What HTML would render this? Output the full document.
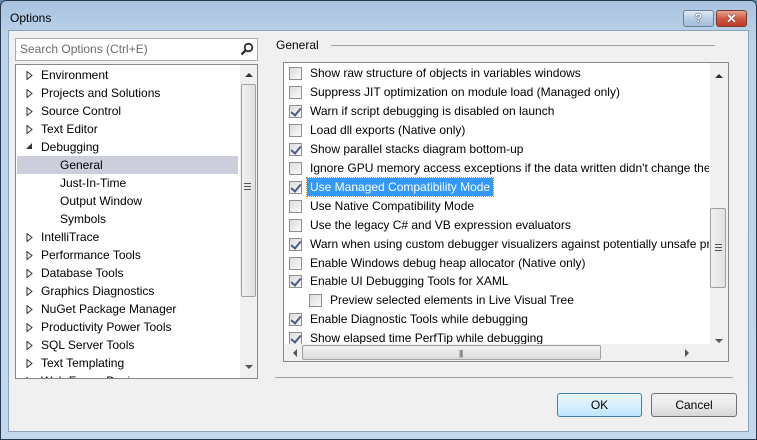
<!DOCTYPE html>
<html><head><style>
*{margin:0;padding:0;box-sizing:border-box}
body{width:757px;height:440px;overflow:hidden;background:#6a8fb5;font-family:"Liberation Sans",sans-serif;font-size:11px;color:#000;position:relative}
.a{position:absolute}
.win{left:0;top:0;width:757px;height:440px;background:linear-gradient(#a9c3df,#bcd3ea 40px,#c3d8ee);border:1px solid #2a3a4a;border-radius:6px 6px 0 0}
.client{left:8px;top:30px;width:741px;height:402px;background:#f0f0f0;border:1px solid #8aa2bc}
.t{white-space:nowrap;line-height:18px}
.cb{width:13px;height:13px;border:1px solid #8e8f8f;background:linear-gradient(135deg,#dcdcdc,#fafafa)}
.ck::after{content:"";position:absolute;left:3px;top:0px;width:4px;height:8px;border:solid #4a5a8a;border-width:0 2px 2px 0;transform:rotate(40deg)}
</style></head><body>
<div class="a win"></div>
<div class="a t" style="left:10px;top:9px;font-size:12px">Options</div>
<div class="a" style="left:683px;top:10px;width:31px;height:17px;border:1px solid #6d7f96;border-radius:3px;background:linear-gradient(#e2ecf7,#b9cde4 50%,#a3bcd9);text-align:center;font-weight:bold;font-size:12px;line-height:15px;color:#fff;text-shadow:0 0 1px #000,0 0 1px #000">?</div>
<div class="a" style="left:716px;top:10px;width:31px;height:17px;border:1px solid #7a3a30;border-radius:3px;background:linear-gradient(#e8a493,#cf5a45 50%,#bd3c28);text-align:center;font-weight:bold;font-size:13px;line-height:15px;color:#fff;text-shadow:0 0 1px #000">✕</div>
<div class="a client"></div>
<div class="a" style="left:15px;top:38px;width:243px;height:23px;background:#fff;border:1px solid #abadb3"></div>
<div class="a t" style="left:20px;top:40px;font-size:12px;color:#6d6d6d">Search Options (Ctrl+E)</div>
<svg class="a" style="left:240px;top:42px" width="14" height="14"><circle cx="8.5" cy="5.5" r="3.8" fill="none" stroke="#333" stroke-width="1.8"/><line x1="5.5" y1="8.5" x2="1.5" y2="12.5" stroke="#333" stroke-width="2.5"/></svg>
<div class="a" style="left:15px;top:64px;width:243px;height:315px;background:#fff;border:1px solid #828790;overflow:hidden">
<div class="a" style="left:1px;top:91px;width:221px;height:18px;background:#cccedb"></div>
<div id="tree" class="a" style="left:-16px;top:-65px;width:240px;height:378px;overflow:hidden;clip-path:inset(65px 0 0 0)"></div>
<div class="a" style="left:224px;top:0;width:17px;height:313px;background:#f0f0f0"></div>
<div class="a" style="left:225px;top:19px;width:15px;height:213px;border:1px solid #a0a0a0;border-radius:2px;background:linear-gradient(90deg,#f2f2f2,#e0e0e0)"></div>
<div class="a" style="left:228px;top:118px;width:7px;height:7px;border-top:1px solid #555;border-bottom:1px solid #555"><div style="margin-top:2px;border-top:1px solid #555"></div></div>
<div class="a" style="left:229px;top:8px;border-left:4px solid transparent;border-right:4px solid transparent;border-bottom:4px solid #333"></div>
<div class="a" style="left:229px;top:300px;border-left:4px solid transparent;border-right:4px solid transparent;border-top:4px solid #555"></div>
</div>
<div class="a t" style="left:276px;top:36px;font-size:12px">General</div>
<div class="a" style="left:331px;top:45px;width:384px;height:1px;background:#a0a0a0"></div>
<div class="a" style="left:283px;top:62px;width:446px;height:300px;background:#fff;border:1px solid #828790;overflow:hidden">
<div class="a" style="left:426px;top:0;width:18px;height:298px;background:#f0f0f0"></div>
<div class="a" style="left:426px;top:145px;width:16px;height:80px;border:1px solid #a0a0a0;border-radius:2px;background:linear-gradient(90deg,#f2f2f2,#e0e0e0)"></div>
<div class="a" style="left:431px;top:181px;width:7px;height:7px;border-top:1px solid #555;border-bottom:1px solid #555"><div style="margin-top:2px;border-top:1px solid #555"></div></div>
<div class="a" style="left:431px;top:11px;border-left:4px solid transparent;border-right:4px solid transparent;border-bottom:4px solid #333"></div>
<div class="a" style="left:431px;top:276px;border-left:4px solid transparent;border-right:4px solid transparent;border-top:4px solid #555"></div>
<div class="a" style="left:0;top:281px;width:444px;height:17px;background:#f0f0f0"></div>
<div class="a" style="left:18px;top:282px;width:299px;height:15px;border:1px solid #a0a0a0;border-radius:2px;background:linear-gradient(#f2f2f2,#dcdcdc)"></div>
<div class="a" style="left:9px;top:286px;border-top:4px solid transparent;border-bottom:4px solid transparent;border-right:4px solid #555"></div>
<div class="a" style="left:401px;top:286px;border-top:4px solid transparent;border-bottom:4px solid transparent;border-left:4px solid #555"></div>
<div class="a" style="left:175px;top:286px;font-size:8px;letter-spacing:-1px;color:#555">|||</div>
<div id="opts" class="a" style="left:0;top:0;width:425px;height:281px;overflow:hidden"></div>
</div>
<div class="a" style="left:275px;top:377px;width:458px;height:1px;background:#a0a0a0"></div>
<div class="a" style="left:557px;top:393px;width:85px;height:24px;border:1px solid #3c7fb1;border-radius:3px;background:linear-gradient(#eaf6fd,#d9f0fc 50%,#bee6fd);text-align:center;line-height:22px;font-size:12px">OK</div>
<div class="a" style="left:651px;top:393px;width:86px;height:24px;border:1px solid #707070;border-radius:3px;background:linear-gradient(#f2f2f2,#ebebeb 50%,#d6d6d6);text-align:center;line-height:22px;font-size:12px">Cancel</div>
<script>
var tree=[["Environment",0],["Projects and Solutions",0],["Source Control",0],["Text Editor",0],["Debugging",2],["General",1],["Just-In-Time",1],["Output Window",1],["Symbols",1],["IntelliTrace",0],["Performance Tools",0],["Database Tools",0],["Graphics Diagnostics",0],["NuGet Package Manager",0],["Productivity Power Tools",0],["SQL Server Tools",0],["Text Templating",0],["Web Forms Designer",0]];
var h="";tree.forEach(function(r,i){var y=66+i*18;
if(r[1]==0)h+='<svg class="a" style="left:26px;top:'+(y+5)+'px" width="7" height="9"><path d="M1 .5L6 4.5L1 8.5Z" fill="#fff" stroke="#333"/></svg>';
if(r[1]==2)h+='<svg class="a" style="left:26px;top:'+(y+5)+'px" width="7" height="7"><path d="M6 0L6 6L0 6Z" fill="#333"/></svg>';
h+='<div class="a t" style="left:'+(r[1]==1?60:41)+'px;top:'+y+'px;font-size:12px">'+r[0]+'</div>';});
document.getElementById("tree").innerHTML=h;
var o=[["Show raw structure of objects in variables windows",0],["Suppress JIT optimization on module load (Managed only)",0],["Warn if script debugging is disabled on launch",1],["Load dll exports (Native only)",0],["Show parallel stacks diagram bottom-up",1],["Ignore GPU memory access exceptions if the data written didn't change the value",0],["Use Managed Compatibility Mode",1,1],["Use Native Compatibility Mode",0],["Use the legacy C# and VB expression evaluators",0],["Warn when using custom debugger visualizers against potentially unsafe processes",1],["Enable Windows debug heap allocator (Native only)",0],["Enable UI Debugging Tools for XAML",1],["Preview selected elements in Live Visual Tree",0,0,1],["Enable Diagnostic Tools while debugging",1],["Show elapsed time PerfTip while debugging",1]];
var s="";o.forEach(function(r,i){var y=1+i*18.95;var ind=r[3]?20:0;
s+='<div class="a cb'+(r[1]?' ck':'')+'" style="left:'+(5+ind)+'px;top:'+(y+3)+'px"></div>';
var st=r[2]?'background:#3399ff;color:#fff;outline:1px dotted #e08a30;padding:0 3px;left:'+(23+ind)+'px':'left:'+(26+ind)+'px';
s+='<div class="a t" style="'+st+';top:'+y+'px;font-size:12px">'+r[0]+'</div>';});
document.getElementById("opts").innerHTML=s;
</script>
</body></html>
